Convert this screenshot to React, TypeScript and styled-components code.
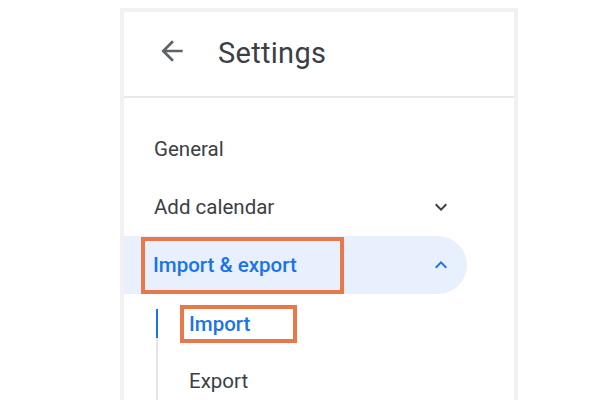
import React from 'react';
import styled, { createGlobalStyle } from 'styled-components';

const GlobalStyle = createGlobalStyle`
  body {
    margin: 0;
    background: #ffffff;
    font-family: Roboto, "Liberation Sans", Arial, sans-serif;
  }
`;

const Page = styled.div`
  width: 600px;
  height: 400px;
  overflow: hidden;
  padding: 8px 0 0 120px;
  box-sizing: border-box;
`;

const Panel = styled.div`
  width: 398px;
  height: 420px;
  box-sizing: border-box;
  border: 4px solid #f1f1f1;
  border-bottom: none;
  background: #ffffff;
`;

const Header = styled.div`
  display: flex;
  align-items: center;
  height: 84px;
  padding-left: 32px;
  gap: 30px;
  border-bottom: 2px solid #e8e8e8;
`;

const BackBox = styled.span`
  display: flex;
  margin-bottom: 6px;
`;

const Title = styled.div`
  font-size: 29px;
  color: #3c4043;
  letter-spacing: 0.3px;
  margin-bottom: 2px;
`;

const Nav = styled.div`
  display: flex;
  flex-direction: column;
  padding-top: 22px;
`;

const Row = styled.div<{ $active?: boolean }>`
  display: flex;
  align-items: center;
  height: 58px;
  width: 343px;
  box-sizing: border-box;
  padding: 0 14px 0 ${(p) => (p.$active ? 17 : 30)}px;
  border-radius: 0 29px 29px 0;
  background: ${(p) => (p.$active ? '#e8f0fe' : 'transparent')};
  color: ${(p) => (p.$active ? '#1a73e8' : '#3c4043')};
  font-size: 20.5px;
  font-weight: ${(p) => (p.$active ? 500 : 400)};
`;

const Label = styled.span`
  flex: 1;
`;

const Marked = styled.span<{ $h: number; $w: number; $pad: number }>`
  display: flex;
  align-items: center;
  box-sizing: border-box;
  height: ${(p) => p.$h}px;
  width: ${(p) => p.$w}px;
  padding-left: ${(p) => p.$pad}px;
  border: 4px solid #e8774a;
  flex-shrink: 0;
  white-space: nowrap;
`;

const Spacer = styled.span`
  flex: 1;
`;

const Chevron = styled.svg`
  width: 24px;
  height: 24px;
  flex-shrink: 0;
`;

const SubList = styled.div`
  display: flex;
  flex-direction: column;
  margin: 15px 0 0 32px;
  border-left: 2px solid #e3e5e8;
  padding-bottom: 40px;
`;

const SubItem = styled.div<{ $active?: boolean }>`
  display: flex;
  align-items: center;
  height: 29px;
  margin-left: -2px;
  padding-left: ${(p) => (p.$active ? 22 : 31)}px;
  border-left: 2px solid ${(p) => (p.$active ? '#1a73e8' : 'transparent')};
  color: ${(p) => (p.$active ? '#1a73e8' : '#3c4043')};
  font-size: 20.5px;
  font-weight: ${(p) => (p.$active ? 500 : 400)};
  & + & {
    margin-top: 28px;
  }
`;

function BackArrow() {
  return (
    <BackBox>
      <svg width="32" height="32" viewBox="0 0 24 24">
        <path d="M20 11H7.83l5.59-5.59L12 4l-8 8 8 8 1.41-1.41L7.83 13H20v-2z" fill="#5f6368" />
      </svg>
    </BackBox>
  );
}

function ChevronIcon({ up, color }: { up?: boolean; color: string }) {
  return (
    <Chevron viewBox="0 0 24 24">
      <path
        d={up ? 'M7.41 15.41L12 10.83l4.59 4.58L18 14l-6-6-6 6z' : 'M7.41 8.59L12 13.17l4.59-4.58L18 10l-6 6-6-6z'}
        fill={color}
      />
    </Chevron>
  );
}

export default function App(): JSX.Element {
  return (
    <Page>
      <GlobalStyle />
      <Panel>
        <Header>
          <BackArrow />
          <Title>Settings</Title>
        </Header>
        <Nav>
          <Row>
            <Label>General</Label>
          </Row>
          <Row>
            <Label>Add calendar</Label>
            <ChevronIcon color="#3c4043" />
          </Row>
          <Row $active>
            <Marked $h={57} $w={203} $pad={8}>Import &amp; export</Marked>
            <Spacer />
            <ChevronIcon up color="#1a73e8" />
          </Row>
          <SubList>
            <SubItem $active>
              <Marked $h={38} $w={117} $pad={5}>Import</Marked>
            </SubItem>
            <SubItem>Export</SubItem>
          </SubList>
        </Nav>
      </Panel>
    </Page>
  );
}
